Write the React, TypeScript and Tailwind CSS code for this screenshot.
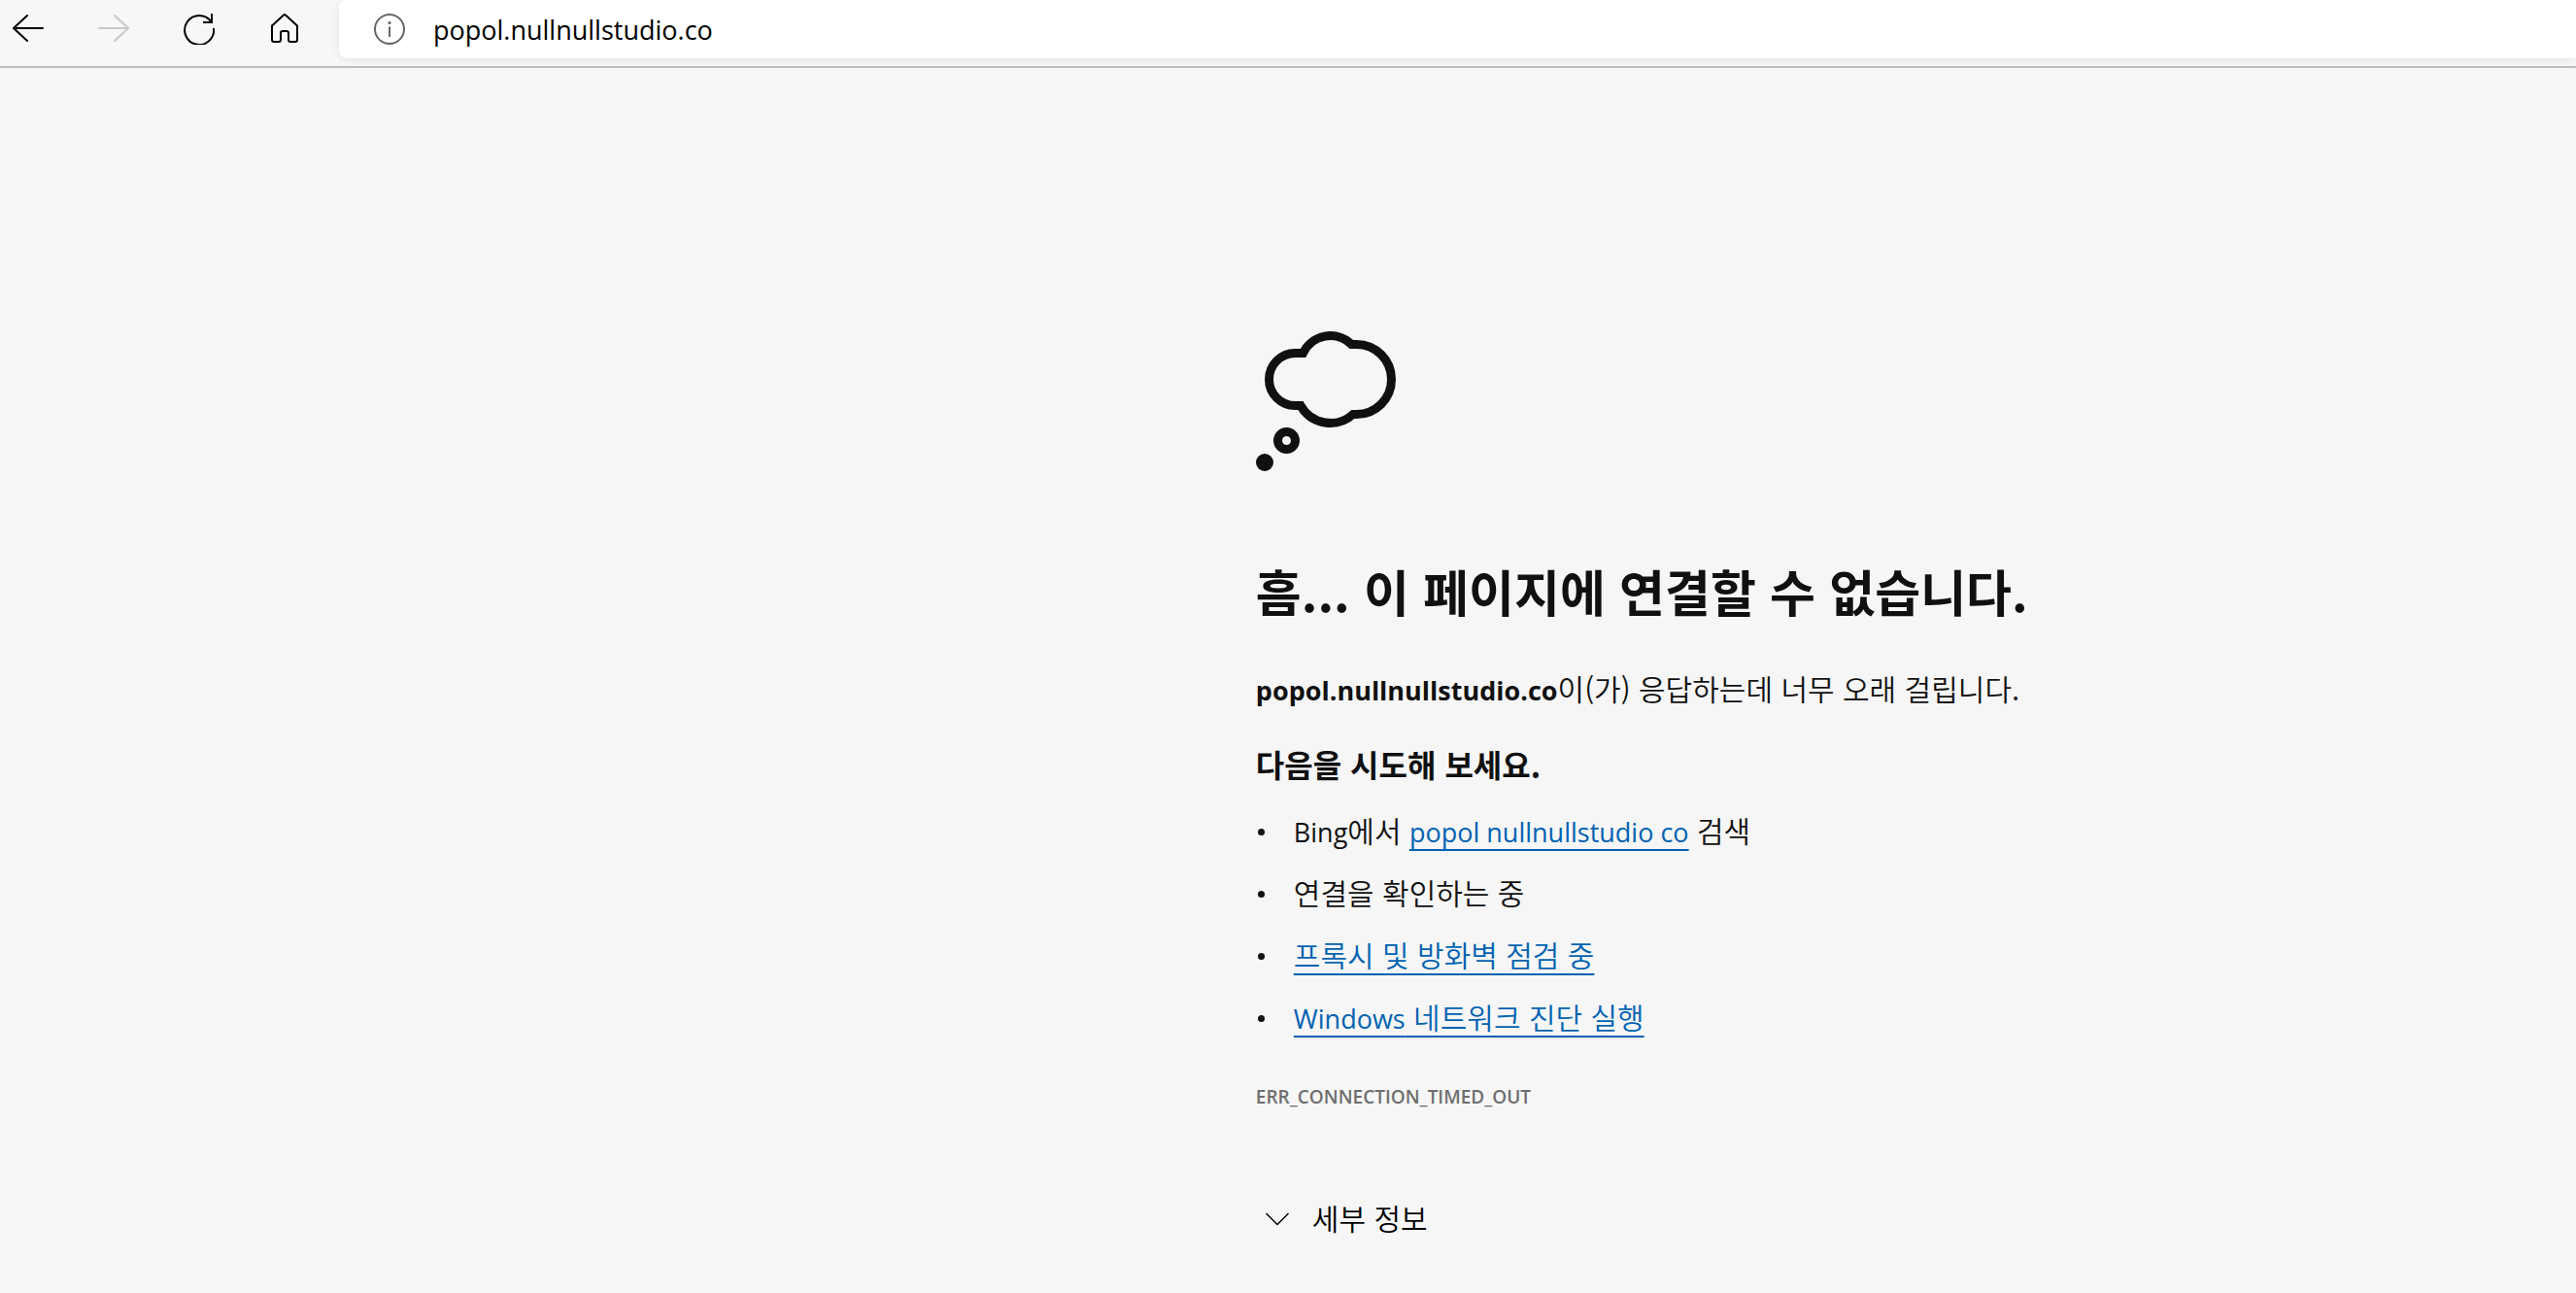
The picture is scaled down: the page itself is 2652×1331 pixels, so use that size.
import { ReactNode } from 'react'

const latin = "font-['Open_Sans','Noto_Sans_CJK_KR',sans-serif]"
const latinInline = `text-[27px] leading-none font-normal ${latin}`
const linkStyle = 'text-[#0062b1] underline decoration-2 underline-offset-[7px] [text-decoration-skip-ink:none]'

const ToolButton: React.FC<{
    label: string
    disabled?: boolean
    children: ReactNode
}> = ({ label, disabled, children }) => {
    return (
        <button type="button" aria-label={label} disabled={disabled} className="h-[60px] shrink-0 text-black disabled:text-[#c8c8c8]">
            <svg className="size-8" viewBox="0 0 32 32" fill="none" stroke="currentColor" strokeWidth="2" strokeLinecap="round" strokeLinejoin="round">
                {children}
            </svg>
        </button>
    )
}

const Toolbar = () => {
    return (
        <header className="flex h-[70px] items-start border-b-2 border-[#bcbcbc] bg-[#f7f7f7] pl-[13px]">
            <nav className="flex shrink-0 gap-14">
                <ToolButton label="뒤로">
                    <path d="M31 15H1M15 2L1 15l14 13" />
                </ToolButton>
                <ToolButton label="앞으로" disabled>
                    <path d="M1 15h30M17 2l14 13-14 13" />
                </ToolButton>
                <ToolButton label="새로 고침">
                    <path d="M31 15A15 15 0 1 1 28.500 8.500" strokeLinecap="butt" />
                    <path d="M29 1v8h-8" strokeLinecap="square" strokeLinejoin="miter" />
                </ToolButton>
                <ToolButton label="홈">
                    <path d="M3 12.500L15 1.500q1-1 2 0L29 12.500V27q0 2-2 2h-5q-2 0-2-2v-7q0-2-2-2h-4q-2 0-2 2v7q0 2-2 2H5q-2 0-2-2z" />
                </ToolButton>
            </nav>
            <div className="ml-10 flex h-[60px] flex-1 items-center rounded-l-lg bg-white pl-9 shadow-[0_2px_10px_rgba(0,0,0,0.08)]">
                <svg className="size-8 shrink-0 text-[#666]" viewBox="0 0 32 32" fill="none" stroke="currentColor" strokeWidth="2">
                    <circle cx="16" cy="16" r="15" />
                    <path d="M16 13.500V24" />
                    <circle cx="16" cy="9.500" r="1.600" fill="currentColor" stroke="none" />
                </svg>
                <input
                    type="text"
                    aria-label="주소"
                    defaultValue="popol.nullnullstudio.co"
                    className={`ml-[29px] h-full min-w-0 flex-1 bg-transparent text-[27px] text-black outline-none ${latin}`}
                />
            </div>
        </header>
    )
}

const ThoughtCloud = () => {
    return (
        <svg className="size-36" viewBox="0 0 144 144" fill="none" stroke="#101010" strokeWidth="9" aria-hidden="true">
            <path d="M48.500 22.500H40.500a27 27 0 0 0 0 54H46A35 35 0 0 0 100 85.500h3.500a36 36 0 0 0 0-72H98.300A31 31 0 0 0 48.500 22.500z" />
            <circle cx="31.500" cy="112.500" r="9" />
            <circle cx="9" cy="135" r="9" fill="#101010" stroke="none" />
        </svg>
    )
}

const Suggestion: React.FC<{ children: ReactNode }> = ({ children }) => {
    return (
        <li className="flex h-10 items-center">
            <span className="mt-1 mr-[30px] ml-[2px] size-[7px] rounded-full bg-[#101010]" />
            <span>{children}</span>
        </li>
    )
}

const App = () => {
    return (
        <div lang="ko" className="flex min-h-screen flex-col bg-[#f6f6f6] font-['Noto_Sans_CJK_KR',sans-serif] text-[#101010]">
            <Toolbar />
            <div className="grid flex-1 grid-cols-[39fr_41fr]">
                <main className="col-start-2 pt-[271px] pb-10 text-[30px] leading-10 font-[350]">
                    <ThoughtCloud />
                    <h1 className="mt-[89px] text-[51px] leading-[68px] font-bold">흠... 이 페이지에 연결할 수 없습니다.</h1>
                    <p className="mt-[46px]">
                        <strong className={`text-[27px] leading-none font-bold ${latin}`}>popol.nullnullstudio.co</strong>
                        이(가) 응답하는데 너무 오래 걸립니다.
                    </p>
                    <h2 className="mt-[38px] text-[32px] font-bold">다음을 시도해 보세요.</h2>
                    <ul className="mt-7 flex flex-col gap-6">
                        <Suggestion>
                            <span className={latinInline}>Bing</span>에서{' '}
                            <a href="#search" className={`${latinInline} ${linkStyle}`}>popol nullnullstudio co</a> 검색
                        </Suggestion>
                        <Suggestion>연결을 확인하는 중</Suggestion>
                        <Suggestion>
                            <a href="#proxy" className={linkStyle}>프록시 및 방화벽 점검 중</a>
                        </Suggestion>
                        <Suggestion>
                            <a href="#diagnose" className={linkStyle}>
                                <span className={latinInline}>Windows</span> 네트워크 진단 실행
                            </a>
                        </Suggestion>
                    </ul>
                    <p className={`mt-[43px] text-[19px] font-semibold text-[#6e6e6e] ${latin}`}>ERR_CONNECTION_TIMED_OUT</p>
                    <button type="button" className="mt-[84px] ml-[10px] flex items-center gap-6 text-black">
                        <svg className="size-6" viewBox="0 0 24 24" fill="none" stroke="currentColor" strokeWidth="1.500">
                            <path d="M.5 8L12 19.500 23.500 8" />
                        </svg>
                        세부 정보
                    </button>
                </main>
            </div>
        </div>
    )
}

export default App
